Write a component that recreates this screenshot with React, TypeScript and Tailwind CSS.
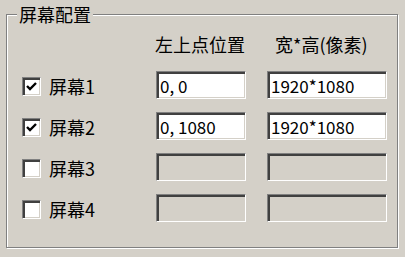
const FONT = { fontFamily: '"Noto Sans CJK SC", "DejaVu Sans", sans-serif' };

type Row = { label: string; checked: boolean; pos: string; size: string };

const rows: Row[] = [
  { label: "屏幕1", checked: true, pos: "0, 0", size: "1920*1080" },
  { label: "屏幕2", checked: true, pos: "0, 1080", size: "1920*1080" },
  { label: "屏幕3", checked: false, pos: "", size: "" },
  { label: "屏幕4", checked: false, pos: "", size: "" },
];

// classic sunken 3d edge
const sunken =
  "border border-t-[#808080] border-l-[#808080] border-r-white border-b-white shadow-[inset_2px_2px_0_#404040,inset_-1px_-1px_0_#d4d0c8]";

function CheckBox({ checked }: { checked: boolean }) {
  return (
    <div className={`h-[19px] w-[19px] shrink-0 bg-white ${sunken} flex items-center justify-center`}>
      {checked && (
        <svg width="13" height="13" viewBox="0 0 13 13">
          <path d="M2 6 L5 9 L11 3" fill="none" stroke="#000" strokeWidth="2.4" />
        </svg>
      )}
    </div>
  );
}

function TextBox({ value, enabled, w }: { value: string; enabled: boolean; w: string }) {
  return (
    <div
      className={`${w} h-[28px] ${sunken} ${enabled ? "bg-white" : "bg-[#d4d0c8]"} flex items-center pl-[3px] text-[17px] text-black leading-none`}
    >
      {value}
    </div>
  );
}

export default function App() {
  return (
    <div className="w-[405px] h-[257px] bg-[#d4d0c8] pt-[14px] pl-[6px] overflow-hidden" style={FONT}>
      <div className="relative w-[392px] h-[234px] border border-[#808080] shadow-[inset_1px_1px_0_#fff,1px_1px_0_#fff]">
        <div className="absolute -top-[11px] left-[10px] bg-[#d4d0c8] px-[2px] text-[18px] leading-[20px] text-black">
          屏幕配置
        </div>

        <div className="pt-[20px] pl-[15px]">
          <div className="grid grid-cols-[134px_90px_21px_120px] text-[18px] leading-[18px] text-black">
            <div />
            <div className="-ml-[1px]">左上点位置</div>
            <div />
            <div className="pl-[8px]">宽*高(像素)</div>
          </div>

          <div className="mt-[18px] flex flex-col gap-[13px]">
            {rows.map((r) => (
              <div key={r.label} className="grid grid-cols-[134px_90px_21px_120px] items-center">
                <div className="flex items-center gap-[8px] translate-y-[1px] text-[18px] leading-[18px] text-black">
                  <CheckBox checked={r.checked} />
                  <span>{r.label}</span>
                </div>
                <TextBox value={r.pos} enabled={r.checked} w="w-[90px]" />
                <div />
                <TextBox value={r.size} enabled={r.checked} w="w-[120px]" />
              </div>
            ))}
          </div>
        </div>
      </div>
    </div>
  );
}
